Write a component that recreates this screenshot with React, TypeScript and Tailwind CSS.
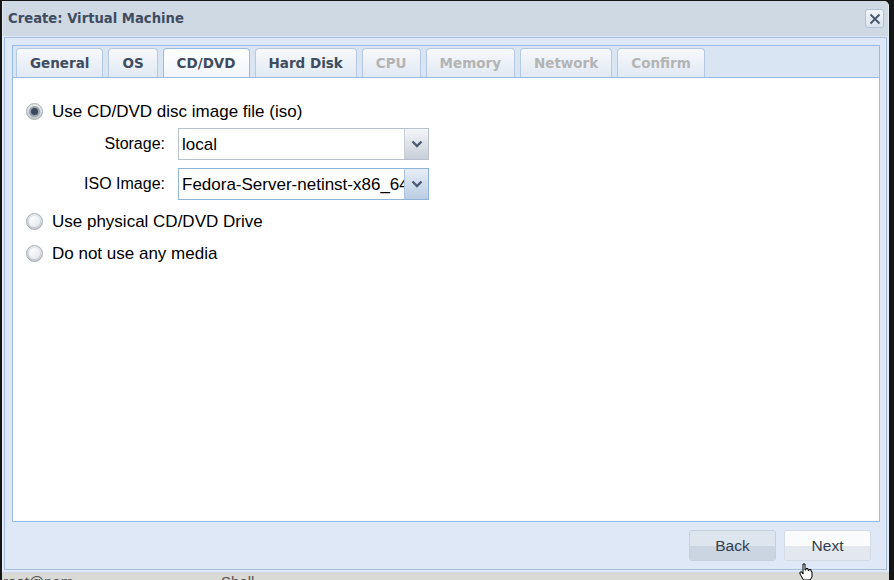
import React from 'react'

const tabs = [
  { label: 'General', enabled: true },
  { label: 'OS', enabled: true },
  { label: 'CD/DVD', enabled: true, active: true },
  { label: 'Hard Disk', enabled: true },
  { label: 'CPU', enabled: false },
  { label: 'Memory', enabled: false },
  { label: 'Network', enabled: false },
  { label: 'Confirm', enabled: false },
]

function Radio({ checked }: { checked?: boolean }) {
  return (
    <span className="flex h-[17px] w-[17px] shrink-0 items-center justify-center rounded-full border border-[#a9aeb5] bg-gradient-to-b from-[#e9ebee] to-[#c3c8ce]">
      <span
        className={`flex h-[11px] w-[11px] items-center justify-center rounded-full ${checked ? 'bg-[#9aa3ad]' : 'bg-gradient-to-br from-[#ffffff] to-[#e3e6ea]'}`}
      >
        {checked && <span className="h-[7px] w-[7px] rounded-full bg-[#3b475a]" />}
      </span>
    </span>
  )
}

function Chevron() {
  return (
    <svg width="12" height="8" viewBox="0 0 12 8">
      <path d="M1.5 1.5 L6 6 L10.5 1.5" fill="none" stroke="#4c5c73" strokeWidth="2.4" />
    </svg>
  )
}

function Combo({ value, focused }: { value: string; focused?: boolean }) {
  return (
    <div
      className={`flex h-full w-[251px] border bg-white ${focused ? 'border-[#8eb4dc]' : 'border-[#b8c0cb]'}`}
    >
      <div className="flex min-w-0 flex-1 items-center overflow-hidden whitespace-nowrap pl-[3px] text-[17px] leading-none text-black">
        {value}
      </div>
      <div
        className={`flex w-[24px] items-center justify-center border-l ${focused ? 'border-[#a9c4e2] bg-gradient-to-b from-[#e6eef8] to-[#bccde2]' : 'border-[#c9cfd7] bg-gradient-to-b from-[#f4f6f9] to-[#c8cfd8]'}`}
      >
        <Chevron />
      </div>
    </div>
  )
}

function RadioRow({ checked, label }: { checked?: boolean; label: string }) {
  return (
    <div className="flex h-[20px] items-center gap-[9px]">
      <Radio checked={checked} />
      <span className="text-[17px] leading-none text-black">{label}</span>
    </div>
  )
}

function FieldRow({ label, children }: { label: string; children: React.ReactNode }) {
  return (
    <div className="flex items-center">
      <span className="w-[139px] text-right text-[16px] leading-none text-black">{label}</span>
      <div className="ml-[13px] h-[32px]">{children}</div>
    </div>
  )
}

function Button({ label, hover }: { label: string; hover?: boolean }) {
  return (
    <button
      className={`flex h-[31px] w-[87px] flex-col overflow-hidden rounded-[3px] border ${hover ? 'border-[#d3dbe5]' : 'border-[#c6d0dc]'}`}
    >
      <span className="relative flex h-full w-full flex-col">
        <span className={`h-1/2 w-full ${hover ? 'bg-[#f9fbfd]' : 'bg-[#dde5ef]'}`} />
        <span className={`h-1/2 w-full ${hover ? 'bg-[#e3e8ee]' : 'bg-[#cbd5e1]'}`} />
        <span className="absolute inset-0 flex items-center justify-center text-[15.5px] text-[#334050]">
          {label}
        </span>
      </span>
    </button>
  )
}

export default function App() {
  return (
    <div className="relative flex h-[580px] w-[894px] flex-col overflow-hidden bg-[#161616] pl-[2px] pt-[1px] font-['Liberation_Sans',Arial,sans-serif]">
      <div className="flex h-[572px] w-[887px] flex-col rounded-tr-[5px] border-x border-b border-x-[#e6ecf3] border-b-[#cfd8e3] bg-[#dfe8f6]">
        {/* title bar */}
        <div className="flex h-[35px] shrink-0 items-center justify-between rounded-tr-[5px] bg-[#cfd9e4] pl-[5px] pr-[4px]">
          <span className="font-['DejaVu_Sans',Verdana,sans-serif] text-[13.2px] font-bold text-[#3f4c5f]">
            Create: Virtual Machine
          </span>
          <span className="flex h-[19px] w-[19px] items-center justify-center rounded-[3px] border border-[#b3c3d6] bg-gradient-to-b from-[#f3f6fa] to-[#d9e2ed]">
            <svg width="12" height="12" viewBox="0 0 12 12">
              <path d="M1.5 1.5 L10.5 10.5 M10.5 1.5 L1.5 10.5" stroke="#4a5a72" strokeWidth="2" />
            </svg>
          </span>
        </div>

        {/* body */}
        <div className="flex flex-1 flex-col pb-[2px] pl-[1px] pr-[1px] pt-[1px]">
          <div className="flex flex-1 flex-col border border-[#a7bfdc] pl-[7px] pr-[6px] pt-[7px]">
            {/* tab panel */}
            <div className="flex flex-1 flex-col border border-[#99bbe8] bg-white">
              <div className="flex h-[32px] shrink-0 items-end gap-[5px] border-b border-[#99bbe8] bg-[#dae5f3] pl-[3px]">
                {tabs.map((t) => (
                  <div
                    key={t.label}
                    className={`flex h-[29px] items-center rounded-t-[4px] border-x border-t px-[13px] font-['DejaVu_Sans',Verdana,sans-serif] text-[13.5px] font-bold ${t.active ? 'border-[#99bbe8] bg-gradient-to-b from-[#ffffff] to-[#f1f5fa]' : 'border-[#b4c9e3] bg-gradient-to-b from-[#f7f9fc] to-[#e1e9f3]'} ${t.enabled ? 'text-[#3f4c5f]' : 'text-[#b4b4b4]'}`}
                  >
                    {t.label}
                  </div>
                ))}
              </div>
              <div className="flex flex-1 flex-col pl-[13px] pt-[23px]">
                <RadioRow checked label="Use CD/DVD disc image file (iso)" />
                <div className="mt-[7px] flex flex-col gap-[8px]">
                  <FieldRow label="Storage:">
                    <Combo value="local" />
                  </FieldRow>
                  <FieldRow label="ISO Image:">
                    <Combo value="Fedora-Server-netinst-x86_64-23.iso" focused />
                  </FieldRow>
                </div>
                <div className="mt-[11px] flex flex-col gap-[12px]">
                  <RadioRow label="Use physical CD/DVD Drive" />
                  <RadioRow label="Do not use any media" />
                </div>
              </div>
            </div>
            {/* footer */}
            <div className="flex h-[47px] shrink-0 items-center justify-end gap-[8px] pr-[9px]">
              <Button label="Back" />
              <Button label="Next" hover />
            </div>
          </div>
        </div>
      </div>

      {/* strip below the window */}
      <div className="relative h-[7px] w-[887px] overflow-hidden bg-[#d9d9d6]">
        <span className="absolute left-[1px] top-[1px] text-[15px] leading-none text-[#555]">root@pam</span>
        <span className="absolute left-[219px] top-[1px] text-[15px] leading-none text-[#555]">Shell</span>
      </div>

      {/* mouse pointer */}
      <svg className="absolute left-[799px] top-[563px]" width="14" height="18" viewBox="0 0 14 18">
        <path
          d="M4 1 L6 1 L6 7 L7 7 L7 5.5 L9 5.5 L9 7.5 L10 7.5 L10 6.5 L12 6.5 L12 8.5 L13 8.5 L13 14 L11 17 L4.5 17 L1 11 L1 9 L3 9 L4 11 Z"
          fill="#fff"
          stroke="#000"
          strokeWidth="1"
        />
      </svg>
    </div>
  )
}
